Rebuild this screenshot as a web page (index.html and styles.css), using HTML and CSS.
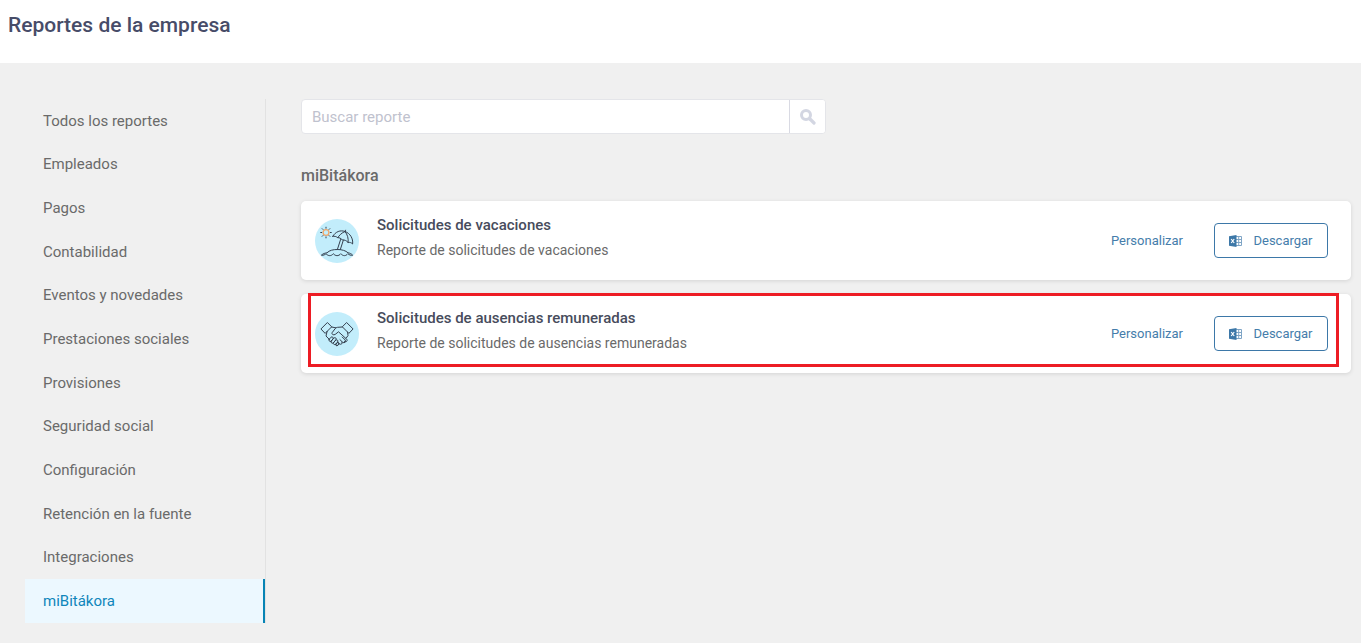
FILE: index.html
```
<!DOCTYPE html>
<html lang="es">
<head>
<meta charset="utf-8">
<meta name="viewport" content="width=device-width, initial-scale=1">
<title>Reportes de la empresa</title>
<link rel="stylesheet" href="styles.css">
</head>
<body>
<svg width="0" height="0" class="sprite" aria-hidden="true">
  <symbol id="excel" viewBox="0 0 13 12">
    <path d="M7 1.5h5.5v9H7M7 4.5h5.5M7 7.5h5.500M9.700 1.500v9" fill="none" stroke="#7fa5c6" stroke-width="1"/>
    <path d="M0 1.300 7.500 0v12L0 10.700z" fill="#3d78a8"/>
    <path d="m2.200 4 3 4m0-4-3 4" stroke="#fff" stroke-width="1.2"/>
  </symbol>
</svg>
<header class="page-header">
  <h1 class="page-title">Reportes de la empresa</h1>
</header>
<div class="layout">
  <nav class="sidebar" aria-label="Categorías">
    <a class="nav-link" href="#">Todos los reportes</a>
    <a class="nav-link" href="#">Empleados</a>
    <a class="nav-link" href="#">Pagos</a>
    <a class="nav-link" href="#">Contabilidad</a>
    <a class="nav-link" href="#">Eventos y novedades</a>
    <a class="nav-link" href="#">Prestaciones sociales</a>
    <a class="nav-link" href="#">Provisiones</a>
    <a class="nav-link" href="#">Seguridad social</a>
    <a class="nav-link" href="#">Configuración</a>
    <a class="nav-link" href="#">Retención en la fuente</a>
    <a class="nav-link" href="#">Integraciones</a>
    <a class="nav-link active" href="#" aria-current="page">miBitákora</a>
  </nav>
  <main class="content">
    <form class="search">
      <input class="search-input" type="text" placeholder="Buscar reporte" aria-label="Buscar reporte">
      <button class="search-button" type="button" aria-label="Buscar">
        <svg width="16" height="16" viewBox="0 0 16 16" fill="none" stroke="#d3d6e2">
          <circle cx="6" cy="6" r="4.500" stroke-width="3"/>
          <path d="m10 10 4 4" stroke-width="3.200" stroke-linecap="round"/>
        </svg>
      </button>
    </form>
    <h2 class="section-title">miBitákora</h2>
    <div class="reports">
      <article class="card">
        <svg class="card-icon" viewBox="0 0 44 44" fill="none" stroke="#34404f" stroke-width="1" stroke-linecap="round" stroke-linejoin="round" aria-hidden="true">
          <circle cx="22" cy="22" r="22" fill="#c2edfb" stroke="none"/>
          <circle cx="11" cy="13.5" r="2.9" stroke="#f0a566" stroke-width="1.3"/>
          <path d="M11 8.2v1M11 17.9v1M5.7 13.5h1M15.3 13.5h1M7.2 9.7l.7.7M14.1 16.6l.7.7M14.8 9.7l-.7.7M7.9 16.6l-.7.7"/>
          <path d="M17.800 17.300C20.500 12.600 25.400 10.800 30 12.500c5.200 1.900 8.300 7 7.600 12.500-1.200-1.300-2.700-1.900-4.500-1.500-1.600-1.900-3.500-2.700-6-2.700-1.300-1.500-2.700-2.200-4.300-2.100-1.700-1.300-3.300-1.700-5-1.400z"/>
          <path d="M30 12.500c-3.500 1.400-5.900 3.900-7.200 6.200M30 12.500c2.600 3.300 3.600 6.900 3.100 11M30 12.500l.5-1.300M25.600 20.500l-3.300 10.200M28.300 21.300l-3 9.300"/>
          <path d="M6.500 36c1.800-1.400 3.500-2 5.500-2.200 2.500-2.500 6-3.300 10.500-3.300s8.300 1.200 10.500 3.300c1.700.2 3.400.9 4.500 2.200"/>
          <path d="M7 36.300c1.700 0 2.800-.5 4-1.600 2.300 2.600 5.300 2.600 7.300 0 2.300 2.600 5.300 2.600 7.500 0 2.200 2.600 5 2.600 7 0 1.500 1.300 2.800 1.700 4.400 1.600"/>
        </svg>
        <div class="card-text">
          <h3 class="card-title">Solicitudes de vacaciones</h3>
          <p class="card-desc">Reporte de solicitudes de vacaciones</p>
        </div>
        <a class="customize" href="#">Personalizar</a>
        <button class="download" type="button">
          <svg width="13" height="12" aria-hidden="true"><use href="#excel"/></svg>
          <span>Descargar</span>
        </button>
      </article>
      <article class="card highlighted">
        <svg class="card-icon" viewBox="0 0 44 44" fill="none" stroke="#34404f" stroke-width="1" stroke-linecap="round" stroke-linejoin="round" aria-hidden="true">
          <circle cx="22" cy="22" r="22" fill="#c2edfb" stroke="none"/>
          <path d="m6.200 16.700 6.200-6.200 4.300 4.300-6.300 6.300zM37.800 16.700l-6.200-6.200-4.300 4.300 6.300 6.300z"/>
          <path d="m12.100 19.400-1.100 4.600 3.200 3.300M16.600 15l4.100.8M27.300 15l-4.700.3c-1.200.1-1.800.6-2.400 1.300l-3.100 4.100c-.8 1.500 1.400 2.900 3.100 1.700l3.300-2.600 8 7.200c1.700 1.800-.3 3.800-2.200 2.400M32.600 20.200l.4 3.400-2 2.700"/>
          <path d="m27.200 25 3.100 3.100c1 1.800-1 3.400-2.500 2.300l-2.800-2.700M27 30c.8 1.900-1 3-2.500 1.800l-1.900-1.700M23.800 31.600c.4 1.800-1.400 2.300-2.600 1.500"/>
          <path d="m14.200 27.300 1.700-2c1.300-1.200 3 .2 2.100 1.600l-1.800 2.200c-1.400 1.100-2.900-.4-2-1.800zM16.200 29.100l2.600-3c1.400-1.200 3.100.2 2.100 1.700l-2.500 3c-1.500 1.100-3-.3-2.200-1.700zM18.400 30.800l2.200-2.500c1.400-1.100 2.900.2 2.100 1.600l-1.900 2.300c-1.400 1-3.100-.1-2.400-1.400zM20.800 32.200l1.200-1.400c1.200-.8 2.400.3 1.800 1.400l-1.200 1.300c-1.100.7-2.400-.1-1.800-1.300z"/>
        </svg>
        <div class="card-text">
          <h3 class="card-title">Solicitudes de ausencias remuneradas</h3>
          <p class="card-desc">Reporte de solicitudes de ausencias remuneradas</p>
        </div>
        <a class="customize" href="#">Personalizar</a>
        <button class="download" type="button">
          <svg width="13" height="12" aria-hidden="true"><use href="#excel"/></svg>
          <span>Descargar</span>
        </button>
      </article>
    </div>
  </main>
</div>
</body>
</html>
```
FILE: styles.css
```
* { box-sizing: border-box; }
body {
  margin: 0;
  min-height: 100vh;
  background: #f0f0f0;
  color: #6a6a6a;
  font-family: Roboto, "Liberation Sans", sans-serif;
  font-size: 15px;
}
h1, h2, h3, p { margin: 0; }
.sprite { position: absolute; }
.page-header {
  padding: 10px 8px 23px;
  background: #fff;
}
.page-title {
  color: #474c68;
  font-size: 21px;
  font-weight: 500;
  line-height: 30px;
}
.layout {
  display: flex;
  align-items: flex-start;
  gap: 35px;
  padding: 36px 10px 20px 25px;
}
.sidebar {
  display: grid;
  grid-auto-rows: 1fr;
  flex: 0 0 241px;
  min-height: 524px;
  border-right: 1px solid #e2e2e2;
}
.nav-link {
  display: flex;
  align-items: center;
  padding: 0 18px;
  color: #6a6a6a;
  text-decoration: none;
}
.nav-link.active {
  border-right: 2px solid #0784b5;
  background: #ecf8ff;
  color: #0f86bb;
}
.content { flex: 1; min-width: 0; }
.search {
  display: flex;
  width: 50%;
  height: 35px;
  border: 1px solid #e4e5e9;
  border-radius: 4px;
  background: #fff;
  overflow: hidden;
}
.search-input {
  flex: 1;
  min-width: 0;
  padding: 0 10px;
  border: 0;
  background: transparent;
  font-family: Roboto, sans-serif;
  font-size: 15px;
}
.search-input::placeholder { color: #bfc2ce; }
.search-button {
  display: grid;
  place-items: center;
  width: 36px;
  padding: 0;
  border: 0;
  border-left: 1px solid #d9dae3;
  background: #fff;
}
.section-title {
  margin: 32px 0 15px;
  font-size: 16px;
  font-weight: 500;
  line-height: 20px;
}
.reports { display: grid; gap: 14px; }
.card {
  position: relative;
  display: flex;
  align-items: center;
  min-height: 79px;
  padding: 10px 23px 10px 14px;
  border-radius: 5px;
  background: #fff;
  box-shadow: 0 1px 4px rgba(0, 0, 0, 0.12);
}
.card.highlighted::after {
  content: "";
  position: absolute;
  inset: -1px 12px 6px 7px;
  border: 3px solid #ed1c24;
  pointer-events: none;
}
.card-icon { flex: none; width: 44px; height: 44px; }
.card-text { flex: 1; padding: 0 18px 6px; }
.card-title {
  color: #474c5c;
  font-size: 15px;
  font-weight: 500;
  line-height: 25px;
}
.card-desc { font-size: 14px; line-height: 25px; }
.customize {
  margin-right: 31px;
  color: #457dab;
  font-size: 13px;
  text-decoration: none;
}
.download {
  display: flex;
  align-items: center;
  justify-content: center;
  gap: 11px;
  width: 114px;
  height: 35px;
  padding: 0;
  border: 1px solid #3d78a8;
  border-radius: 4px;
  background: #fff;
  color: #457dab;
  font-family: Roboto, sans-serif;
  font-size: 13px;
}
```
